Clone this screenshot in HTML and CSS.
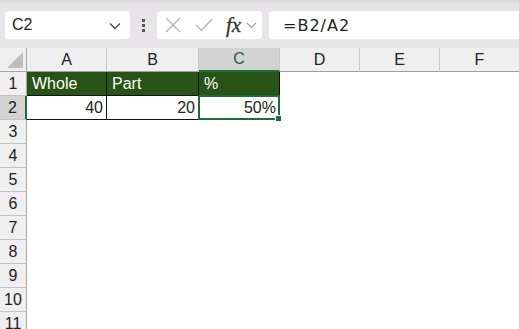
FILE: index.html
```html
<!DOCTYPE html>
<html lang="en">
<head>
  <meta charset="UTF-8">
  <title>Sheet</title>
  <link rel="stylesheet" href="styles.css">
</head>
<body>
  <div class="toolbar">
    <div class="namebox">
      <span>C2</span>
      <svg class="chev" width="12" height="8" viewBox="0 0 12 8"><path d="M1 1.5 L6 6.5 L11 1.5" fill="none" stroke="#444" stroke-width="1.3"/></svg>
    </div>
    <div class="dots"><i></i><i></i><i></i></div>
    <div class="fbuttons">
      <svg width="16" height="16" viewBox="0 0 16 16"><path d="M1 1 L15 15 M15 1 L1 15" stroke="#b4b4b4" stroke-width="1.3"/></svg>
      <svg width="18" height="14" viewBox="0 0 18 14"><path d="M1 7 L6.5 12.5 L17 1" fill="none" stroke="#b4b4b4" stroke-width="1.3"/></svg>
      <span class="fx">fx</span>
      <svg width="11" height="7" viewBox="0 0 11 7"><path d="M1 1 L5.5 5.5 L10 1" fill="none" stroke="#a0a0a0" stroke-width="1.2"/></svg>
    </div>
    <div class="formula">=B2/A2</div>
  </div>

  <div class="sheet">
    <div class="corner"><span class="tri"></span></div>
    <div class="colhead">A</div>
    <div class="colhead">B</div>
    <div class="colhead sel">C</div>
    <div class="colhead">D</div>
    <div class="colhead">E</div>
    <div class="colhead">F</div>

    <div class="rowhead">1</div>
    <div class="cell title">Whole</div>
    <div class="cell title">Part</div>
    <div class="cell title">%</div>
    <div class="cell"></div><div class="cell"></div><div class="cell"></div>

    <div class="rowhead sel">2</div>
    <div class="cell data num">40</div>
    <div class="cell data num">20</div>
    <div class="cell data num active">50%</div>
    <div class="cell"></div><div class="cell"></div><div class="cell"></div>

    <div class="rowhead">3</div><div class="cell span"></div>
    <div class="rowhead">4</div><div class="cell span"></div>
    <div class="rowhead">5</div><div class="cell span"></div>
    <div class="rowhead">6</div><div class="cell span"></div>
    <div class="rowhead">7</div><div class="cell span"></div>
    <div class="rowhead">8</div><div class="cell span"></div>
    <div class="rowhead">9</div><div class="cell span"></div>
    <div class="rowhead">10</div><div class="cell span"></div>
    <div class="rowhead">11</div><div class="cell span"></div>
  </div>
</body>
</html>
```

FILE: styles.css
```css
body {
  margin: 0;
  width: 519px;
  height: 329px;
  overflow: hidden;
  background: #fff;
  font-family: "Liberation Sans", Arial, sans-serif;
  color: #222;
}

.toolbar {
  height: 48px;
  box-sizing: border-box;
  padding: 11px 0 9px 5px;
  display: flex;
  align-items: stretch;
  background: linear-gradient(#d9d7d9 0, #e6e4e6 4px, #e8e6e8 100%);
}

.namebox {
  width: 125px;
  box-sizing: border-box;
  background: #fff;
  border-radius: 4px;
  display: flex;
  align-items: center;
  justify-content: space-between;
  padding: 0 9px 0 7px;
  font-size: 16px;
  color: #222;
}

.namebox .chev {
  margin-top: 2px;
}

.dots {
  width: 27px;
  display: flex;
  flex-direction: column;
  align-items: center;
  justify-content: center;
  gap: 2px;
}

.dots i {
  width: 3px;
  height: 3px;
  background: #555;
}

.fbuttons {
  width: 105px;
  box-sizing: border-box;
  background: #fff;
  border-radius: 4px;
  display: flex;
  align-items: center;
  padding: 0 4px 0 8px;
}

.fbuttons svg:nth-child(1) {
  margin-right: 14px;
}

.fbuttons svg:nth-child(2) {
  margin-right: 13px;
}

.fx {
  font-family: "Liberation Serif", "Times New Roman", serif;
  font-style: italic;
  font-size: 21px;
  color: #333;
  margin-right: 5px;
  line-height: 1;
  -webkit-text-stroke: 0.3px #333;
}

.formula {
  flex: 1;
  margin-left: 7px;
  background: #fff;
  border-radius: 4px 0 0 4px;
  display: flex;
  align-items: center;
  padding-left: 14px;
  font-family: "DejaVu Sans", sans-serif;
  font-size: 16px;
  letter-spacing: 1px;
  color: #222;
}

.sheet {
  display: grid;
  grid-template-columns: 27px 80px 92px 81px 80px 80px 80px;
  grid-auto-rows: 24px;
}

.corner {
  background: #efefef;
  border-right: 1px solid #a6a6a6;
  border-bottom: 1px solid #a6a6a6;
  position: relative;
}

.tri {
  position: absolute;
  right: 3px;
  bottom: 3px;
  width: 0;
  height: 0;
  border-left: 16px solid transparent;
  border-bottom: 16px solid #bdbdbd;
}

.colhead {
  background: #efefef;
  border-right: 1px solid #c8c8c8;
  border-bottom: 1px solid #a0a0a0;
  display: flex;
  align-items: center;
  justify-content: center;
  font-size: 16px;
  color: #222;
}

.colhead.sel {
  background: #d3d3d3;
  border-bottom: 2px solid #1e6b3c;
  color: #1d5e46;
}

.rowhead {
  background: #efefef;
  border-right: 1px solid #a6a6a6;
  border-bottom: 1px solid #c4c4c4;
  display: flex;
  align-items: center;
  justify-content: center;
  font-size: 16px;
  color: #222;
}

.rowhead.sel {
  background: #d3d3d3;
  border-right: 2px solid #1e6b3c;
}

.cell {
  font-size: 16px;
  display: flex;
  align-items: center;
  padding: 0 3px;
  box-sizing: border-box;
}

.cell.span {
  grid-column: span 6;
}

.cell.title {
  background: #275317;
  color: #fff;
  border-right: 1px solid #111;
  border-bottom: 1px solid #111;
  padding-left: 5px;
}

.cell.data {
  border-right: 1px solid #111;
  border-bottom: 1px solid #111;
}

.cell.num {
  justify-content: flex-end;
}

.cell.active {
  position: relative;
  margin: -1px 0 0 -1px;
  border: 2px solid #1e6b3c;
  padding-right: 2px;
}

.cell.active::after {
  content: "";
  position: absolute;
  right: -4px;
  bottom: -4px;
  width: 5px;
  height: 5px;
  background: #1e6b3c;
  border: 1px solid #fff;
}
```
